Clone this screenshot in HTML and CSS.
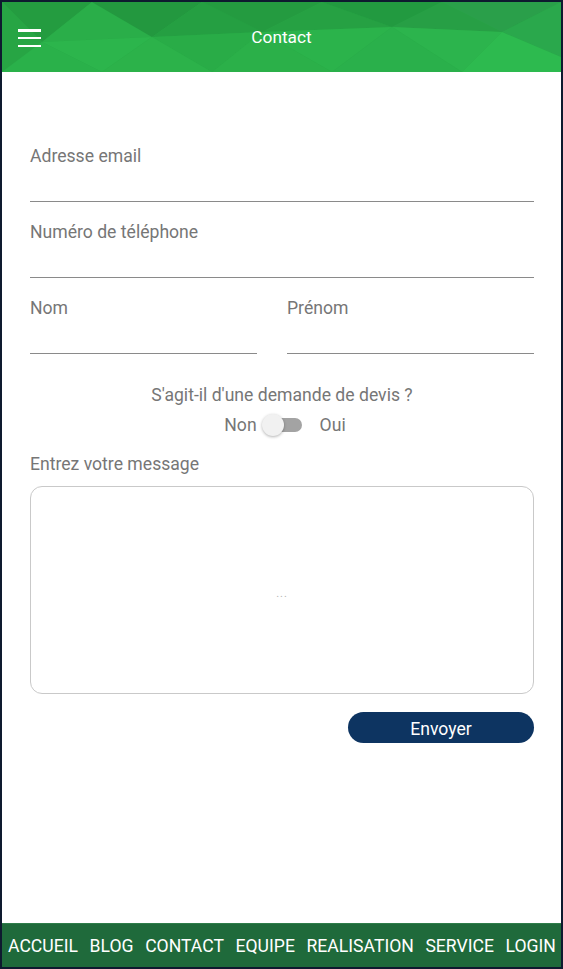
FILE: index.html
```html
<!DOCTYPE html>
<html lang="fr">
<head>
<meta charset="utf-8">
<title>Contact</title>
<link rel="stylesheet" href="styles.css">
</head>
<body>
<div class="app">
  <header class="topbar">
    <svg class="poly" viewBox="0 0 559 70" preserveAspectRatio="none" aria-hidden="true">
      <rect width="559" height="70" fill="#28a946"/>
      <polygon points="0,0 90,0 40,40" fill="#249c40"/>
      <polygon points="0,0 40,40 0,70" fill="#27a544"/>
      <polygon points="40,40 90,0 150,35" fill="#2aae49"/>
      <polygon points="90,0 200,0 150,35" fill="#23983f"/>
      <polygon points="150,35 200,0 260,30" fill="#259f42"/>
      <polygon points="40,40 150,35 100,70" fill="#2cb54c"/>
      <polygon points="0,70 40,40 100,70" fill="#2ab14a"/>
      <polygon points="200,0 320,0 260,30" fill="#249b40"/>
      <polygon points="260,30 320,0 390,25" fill="#26a143"/>
      <polygon points="150,35 260,30 210,70" fill="#29ac47"/>
      <polygon points="260,30 390,25 330,70" fill="#2bb34b"/>
      <polygon points="320,0 440,0 390,25" fill="#229a40"/>
      <polygon points="390,25 440,0 500,30" fill="#279f45"/>
      <polygon points="440,0 559,0 500,30" fill="#2a9f4a"/>
      <polygon points="500,30 559,0 559,55" fill="#2aa84c"/>
      <polygon points="390,25 500,30 460,70" fill="#2cb44d"/>
      <polygon points="500,30 559,55 559,70 460,70" fill="#2dba4f"/>
      <polygon points="100,70 150,35 210,70" fill="#2cb24a"/>
      <polygon points="210,70 260,30 330,70" fill="#2bb049"/>
      <polygon points="330,70 390,25 460,70" fill="#2ab04b"/>
    </svg>
    <button class="menu" aria-label="Menu">
      <span></span><span></span><span></span>
    </button>
    <h1 class="title">Contact</h1>
  </header>

  <main class="content">
    <form class="form">
      <label class="field">
        <span class="label">Adresse email</span>
        <span class="input"></span>
      </label>
      <label class="field">
        <span class="label">Numéro de téléphone</span>
        <span class="input"></span>
      </label>
      <div class="row">
        <label class="field half">
          <span class="label">Nom</span>
          <span class="input"></span>
        </label>
        <label class="field half">
          <span class="label">Prénom</span>
          <span class="input"></span>
        </label>
      </div>

      <div class="devis">
        <p class="question">S'agit-il d'une demande de devis ?</p>
        <div class="toggle-row">
          <span>Non</span>
          <span class="switch"><span class="track"></span><span class="thumb"></span></span>
          <span>Oui</span>
        </div>
      </div>

      <div class="message">
        <span class="label">Entrez votre message</span>
        <div class="textarea"><span class="placeholder">...</span></div>
      </div>

      <div class="actions">
        <button type="button" class="send">Envoyer</button>
      </div>
    </form>
  </main>

  <nav class="bottom">
    <a>ACCUEIL</a>
    <a>BLOG</a>
    <a>CONTACT</a>
    <a>EQUIPE</a>
    <a>REALISATION</a>
    <a>SERVICE</a>
    <a>LOGIN</a>
  </nav>
</div>
</body>
</html>
```

FILE: styles.css
```css
* { box-sizing: border-box; }
html, body { margin: 0; padding: 0; }
body {
  background: #0e1a2f;
  padding: 2px;
  width: 563px;
  height: 969px;
  font-family: Roboto, "Noto Sans", sans-serif;
}
.app {
  width: 559px;
  height: 965px;
  background: #fff;
  display: flex;
  flex-direction: column;
}
.topbar {
  position: relative;
  height: 70px;
  flex: none;
  display: flex;
  align-items: center;
  justify-content: center;
  overflow: hidden;
}
.poly {
  position: absolute;
  inset: 0;
  width: 100%;
  height: 100%;
}
.menu {
  position: absolute;
  left: 16px;
  top: 27px;
  width: 23px;
  height: 18px;
  padding: 0;
  border: 0;
  background: none;
  display: flex;
  flex-direction: column;
  justify-content: space-between;
}
.menu span {
  display: block;
  height: 2.5px;
  background: #fff;
}
.title {
  position: relative;
  margin: 0;
  font-size: 17.3px;
  font-weight: 400;
  color: #fff;
  line-height: 20px;
  margin-top: -1px;
}
.content {
  flex: 1;
  padding: 74px 27px 0 28px;
}
.form {
  display: flex;
  flex-direction: column;
}
.field {
  display: flex;
  flex-direction: column;
  margin-bottom: 20px;
}
.label {
  font-size: 17.6px;
  line-height: 20px;
  color: #767676;
}
.input {
  height: 36px;
  border-bottom: 1px solid #8a8a8a;
}
.row {
  display: flex;
  gap: 30px;
}
.half { flex: 1; margin-bottom: 0; }
.half:first-child { flex: 0 0 227px; }
.devis {
  margin-top: 31px;
  display: flex;
  flex-direction: column;
  align-items: center;
  color: #767676;
  font-size: 17.6px;
  line-height: 20px;
}
.question { margin: 0; }
.toggle-row {
  margin-top: 9px;
  margin-left: 6px;
  display: flex;
  align-items: center;
}
.switch {
  position: relative;
  width: 40px;
  height: 22px;
  margin: 0 18px 0 5px;
}
.track {
  position: absolute;
  left: 4px;
  right: 0;
  top: 4px;
  height: 14px;
  border-radius: 7px;
  background: #a3a3a3;
}
.thumb {
  position: absolute;
  left: 0;
  top: 0;
  width: 22px;
  height: 22px;
  border-radius: 50%;
  background: #f1f1f1;
  box-shadow: 0 1px 3px rgba(0,0,0,0.3);
}
.message {
  margin-top: 18px;
  display: flex;
  flex-direction: column;
}
.textarea {
  margin-top: 12px;
  height: 208px;
  border: 1px solid #c9c9c9;
  border-radius: 12px;
  display: flex;
  align-items: center;
  justify-content: center;
}
.placeholder {
  color: #b5b5b5;
  font-size: 11px;
  letter-spacing: 1px;
  margin-top: 6px;
}
.actions {
  display: flex;
  justify-content: flex-end;
  margin-top: 18px;
}
.send {
  width: 186px;
  height: 31px;
  border: 0;
  border-radius: 16px;
  background: #0d3461;
  color: #fff;
  font-family: Roboto, "Noto Sans", sans-serif;
  font-size: 17.6px;
  padding: 0;
  padding-top: 2px;
}
.bottom {
  flex: none;
  height: 44px;
  background: #1f6a3b;
  border-top: 1px solid #2f7d4b;
  display: flex;
  align-items: center;
  justify-content: space-between;
  padding: 0 5px 0 6px;
}
.bottom a {
  color: #fff;
  font-size: 17.6px;
  line-height: 20px;
}
```
